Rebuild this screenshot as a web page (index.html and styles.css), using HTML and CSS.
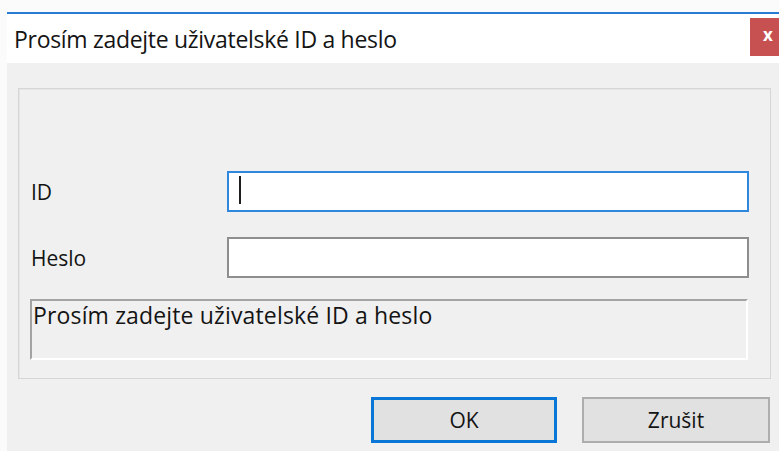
FILE: index.html
```html
<!DOCTYPE html>
<html lang="cs">
<head>
<meta charset="utf-8">
<title>Přihlášení</title>
<link rel="stylesheet" href="styles.css">
</head>
<body>
<div class="screen">
  <div class="dialog">
    <div class="titlebar">
      <span class="title">Prosím zadejte uživatelské ID a heslo</span>
      <span class="close">x</span>
    </div>
    <div class="content">
      <div class="group">
        <div class="form">
          <label class="label">ID</label>
          <div class="field focused"><span class="caret"></span></div>
          <label class="label">Heslo</label>
          <div class="field"></div>
        </div>
        <div class="status">Prosím zadejte uživatelské ID a heslo</div>
      </div>
      <div class="buttons">
        <button class="btn default">OK</button>
        <button class="btn">Zrušit</button>
      </div>
    </div>
  </div>
</div>
</body>
</html>
```
FILE: styles.css
```css
html, body {
  margin: 0;
  padding: 0;
  background: #fbfbfb;
  overflow: hidden;
  width: 779px;
  height: 451px;
}

.screen {
  padding: 12px 0 0 7px;
  font-family: "Open Sans", "Noto Sans", sans-serif;
  color: #141414;
}

.dialog {
  width: 781px;
  height: 440px;
  border-top: 2px solid #2a7bd3;
  background: #f0f0f0;
}

.titlebar {
  height: 49px;
  background: #ffffff;
  display: flex;
  align-items: flex-start;
}

.title {
  font-size: 23px;
  line-height: 28px;
  margin: 11px 0 0 7px;
  letter-spacing: -0.3px;
}

.close {
  margin-left: auto;
  margin-top: 4px;
  width: 36px;
  height: 38px;
  background: #c75050;
  color: #ffffff;
  font-weight: 700;
  font-size: 17px;
  line-height: 34px;
  text-align: center;
  margin-right: 2px;
}

.content {
  padding: 25px 0 0 11px;
}

.group {
  border: 1px solid #d6d6d6;
  box-shadow: inset 1px 1px 0 #e6e6e6;
  padding: 0 0 0 11px;
  box-sizing: border-box;
  width: 753px;
  height: 291px;
}

.form {
  display: grid;
  grid-template-columns: 197px 522px;
  grid-auto-rows: 41px;
  row-gap: 25px;
  align-items: center;
  padding-top: 82px;
}

.label {
  font-size: 21px;
  padding-left: 1px;
}

.field {
  height: 41px;
  box-sizing: border-box;
  background: #ffffff;
  border: 2px solid #8e8e8e;
  padding: 3px 0 0 10px;
}

.field.focused {
  border-color: #2f88dd;
}

.caret {
  display: block;
  width: 2px;
  height: 28px;
  background: #1e1e1e;
}

.status {
  margin-top: 21px;
  width: 718px;
  height: 61px;
  box-sizing: border-box;
  border-top: 2px solid #a3a3a3;
  border-left: 2px solid #a3a3a3;
  border-right: 2px solid #ffffff;
  border-bottom: 2px solid #ffffff;
  font-size: 23px;
  line-height: 28px;
  padding: 0 0 0 1px;
  letter-spacing: 0.15px;
}

.buttons {
  width: 753px;
  display: flex;
  justify-content: flex-end;
  gap: 25px;
  padding-top: 18px;
}

.btn {
  font-family: "Open Sans", "Noto Sans", sans-serif;
  font-size: 21px;
  color: #141414;
  width: 188px;
  height: 46px;
  background: #e1e1e1;
  border: 2px solid #adadad;
  padding: 0;
  margin: 0 1px 0 0;
}

.btn.default {
  width: 186px;
  border: 3px solid #0a77d6;
  margin-right: 0;
}
```
